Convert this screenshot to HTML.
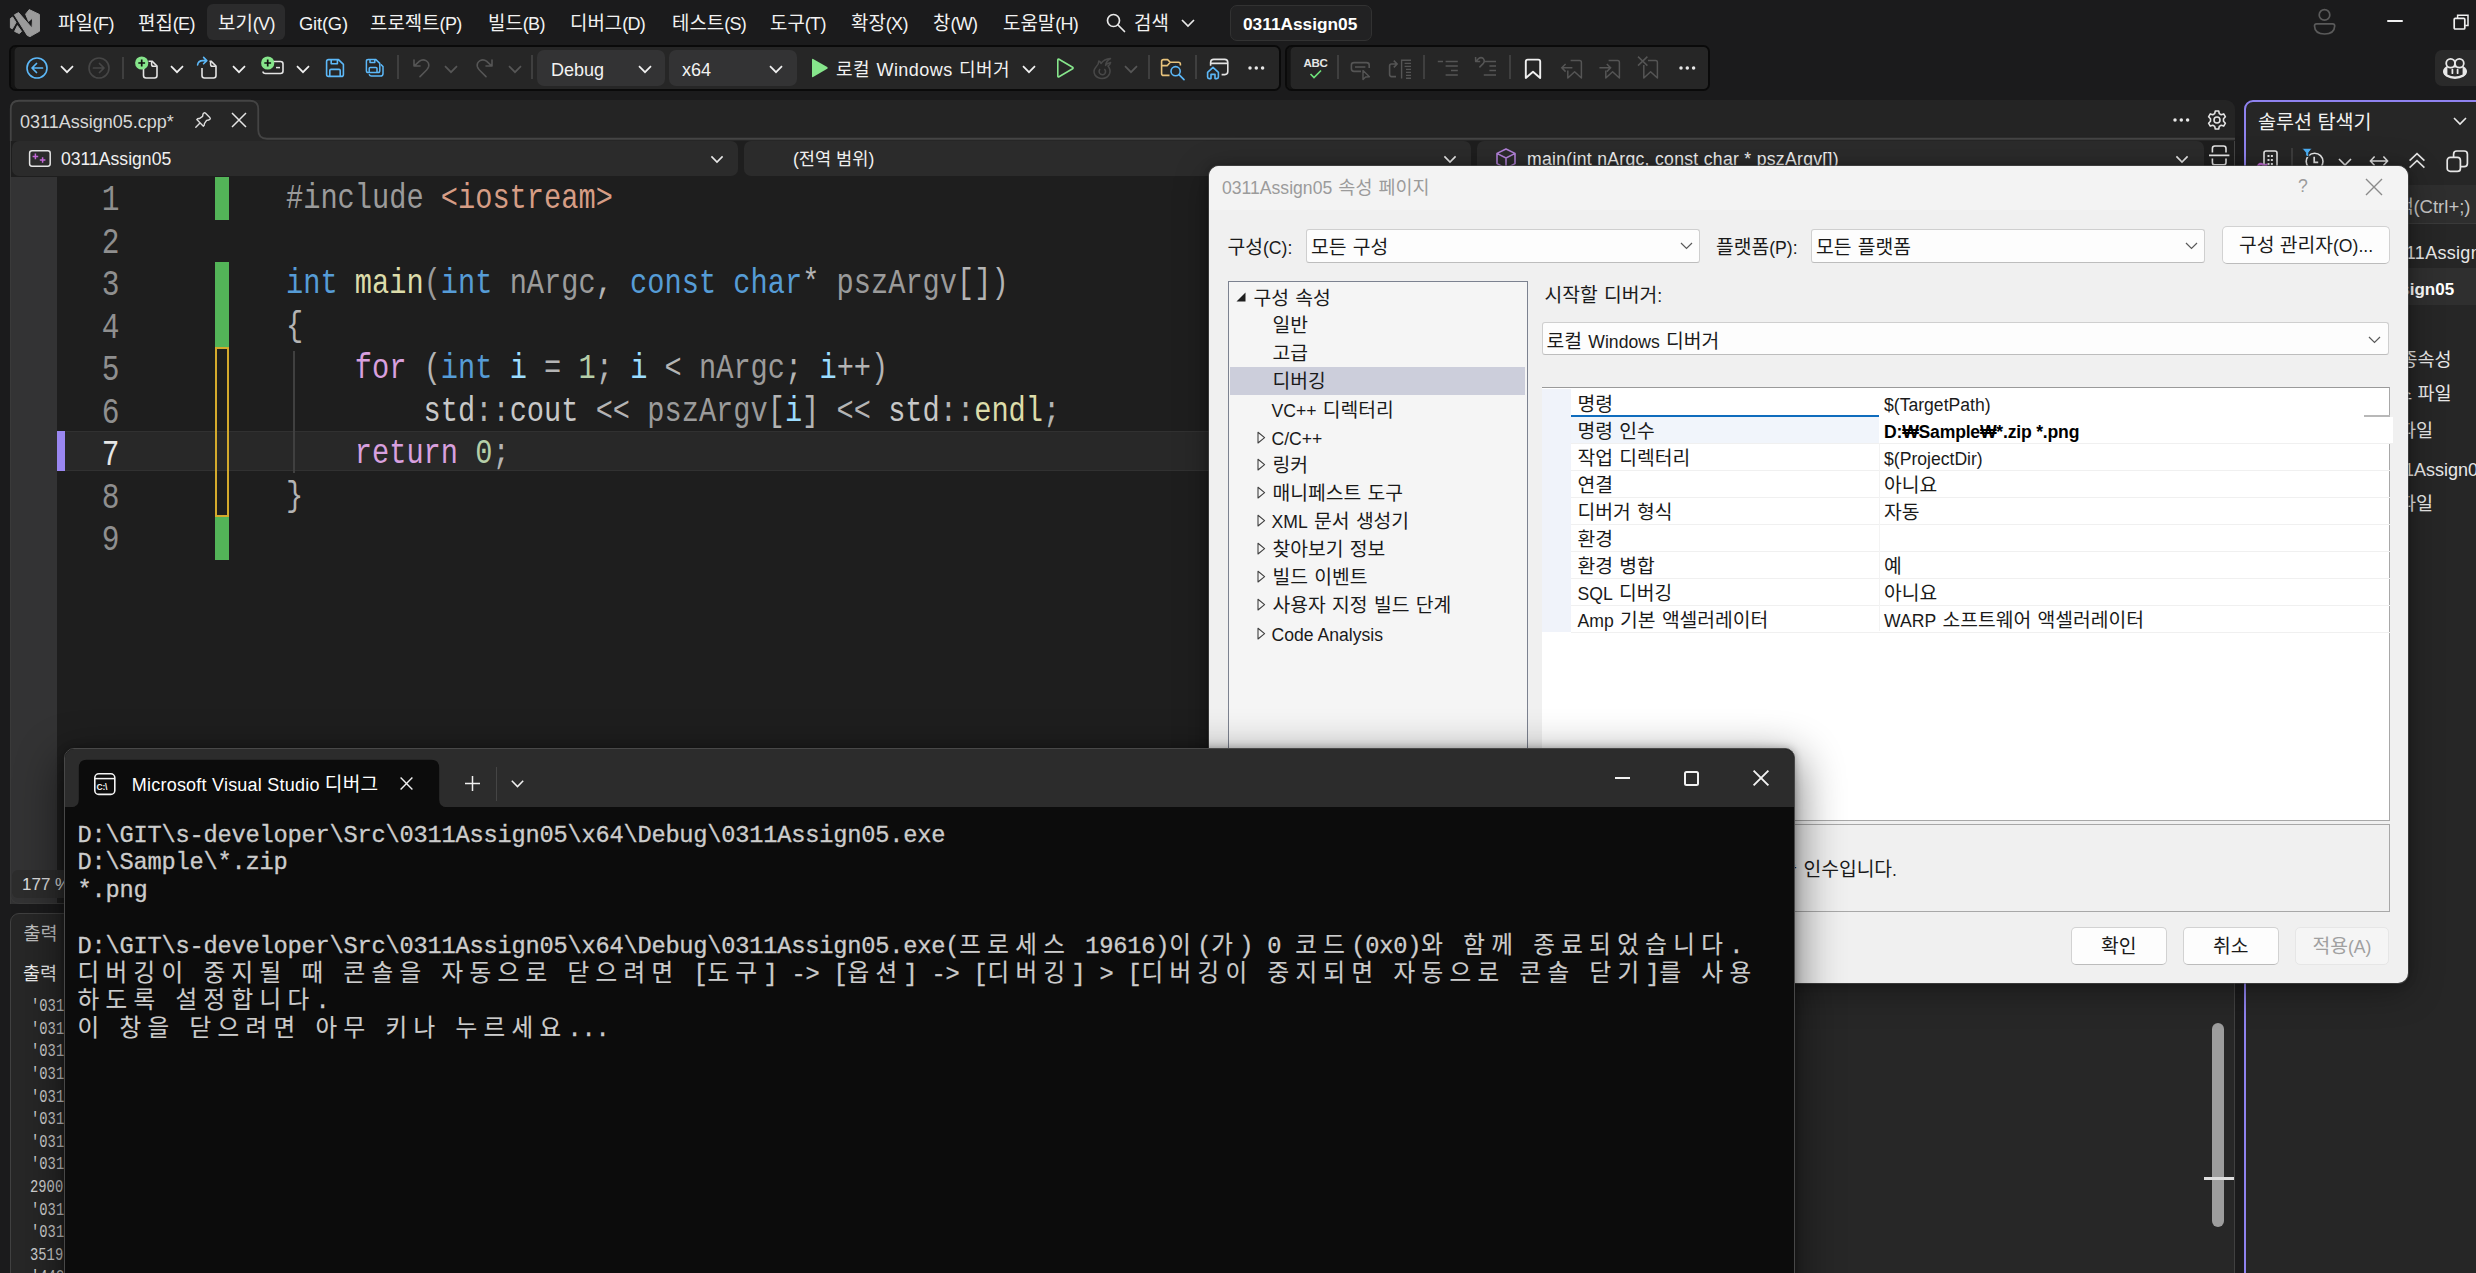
<!DOCTYPE html>
<html lang="ko">
<head>
<meta charset="utf-8">
<title>0311Assign05 - Microsoft Visual Studio</title>
<style>
*{box-sizing:border-box;margin:0;padding:0}
html,body{width:2476px;height:1273px;overflow:hidden;background:#1b1b1c}
body{position:relative;font-family:"Liberation Sans","Noto Sans CJK KR",sans-serif;color:#f0f0f0;font-size:18px}
.abs{position:absolute}
.t{position:absolute;white-space:pre;line-height:1}
svg{position:absolute;overflow:visible}
#menubar{left:0;top:0;width:2476px;height:46px;background:#1b1b1c}
.mi{position:absolute;top:12.6px;font-size:18.9px;line-height:22px;white-space:pre;color:#f2f2f2;letter-spacing:0}
.ml{font-size:18px;letter-spacing:-0.65px}
.tbgroup{position:absolute;top:44.7px;height:46px;background:#262626;border:2.2px solid #0a0a0a;border-radius:6.5px;box-shadow:inset 3.6px 0 0 #141414}
.combo{position:absolute;top:50px;height:36px;background:#333334;border-radius:7px}
.sep{position:absolute;width:2px;background:#3f3f3f;top:57px;height:22px}
.tt{position:absolute;top:58.5px;font-size:18px;line-height:22px;white-space:pre;color:#f2f2f2}
.code{position:absolute;left:286px;white-space:pre;font-family:"Liberation Mono",monospace;font-size:35px;line-height:42px;height:42px;color:#c8c8c8;transform:scaleX(0.819);transform-origin:0 0}
.ln{position:absolute;left:50px;width:69.5px;text-align:right;font-family:"Liberation Mono",monospace;font-size:36px;line-height:42px;height:42px;color:#8f8f8f;transform:scaleX(0.82);transform-origin:100% 0}
.kw{color:#569cd6}.fn{color:#dcdcaa}.pp{color:#9b9b9b}.st{color:#d69d85}.ct{color:#d8a0df}.nm{color:#b5cea8}.vr{color:#9cdcfe}.op{color:#b4b4b4}.pa{color:#9a9a9a}.id{color:#c8c8c8}.ns{color:#c8c8c8}
.nav{position:absolute;top:140.6px;height:35.6px;background:#2b2b2b;border-radius:7px}
.navt{position:absolute;top:149px;font-size:17.6px;line-height:20px;white-space:pre;color:#f0f0f0}
.ol{position:absolute;white-space:pre;font-family:"Liberation Mono",monospace;font-size:17.5px;line-height:20px;color:#d4d4d4;transform:scaleX(0.79);transform-origin:0 0}
.se{position:absolute;white-space:pre;font-size:18px;line-height:22px;color:#e8e8e8}
#dlg{position:absolute;left:1209px;top:166px;width:1199px;height:817px;background:#f0f0f0;border-radius:10px;box-shadow:0 0 0 1px rgba(80,80,80,.6),0 8px 34px rgba(0,0,0,.34),0 0 10px rgba(0,0,0,.28);overflow:hidden;color:#1a1a1a}
#dlg .d{position:absolute;white-space:pre;font-size:19.3px;line-height:24px;color:#1a1a1a;word-spacing:1px}
#dlg .l{font-size:17.6px;word-spacing:0}
#dlg .cb{position:absolute;background:#fdfdfd;border:1px solid #cfcfcf;border-bottom-color:#bdbdbd;border-radius:3px}
#dlg .btn{position:absolute;background:#fdfdfd;border:1px solid #d2d2d2;border-bottom-color:#bcbcbc;border-radius:5px;text-align:center;font-size:19.3px;line-height:37.5px;color:#1a1a1a}
#dlg .rl{position:absolute;left:362px;width:818px;height:1px;background:#efefef}
#dlg .d{margin-top:1.5px}
#con{position:absolute;left:63.5px;top:747.5px;width:1731.6px;height:560px;background:#0c0c0c;border:1.5px solid #484848;border-radius:10px 10px 0 0;box-shadow:0 14px 44px 5px rgba(0,0,0,.48),0 0 9px rgba(0,0,0,.3);overflow:hidden}
.cl{position:absolute;left:77.6px;white-space:pre;font-family:"Liberation Mono","Noto Sans CJK KR",monospace;font-size:23.7px;letter-spacing:-0.22px;line-height:28px;height:28px;color:#cccccc;-webkit-text-stroke:0.3px #cccccc}
.cl .k{font-size:23.5px;letter-spacing:6.38px;-webkit-text-stroke:0.15px #cccccc}

</style>
</head>
<body>
<div id="menubar" class="abs">
<svg style="left:0;top:0" width="50" height="46" viewBox="0 0 50 46"><g fill="#9b9b9b" stroke="#9b9b9b" stroke-width="1" stroke-linejoin="round"><path d="M10.4 18.6 L12.6 17 L16 22.4 L12.4 28.8 L10.4 27.8 Z"/><path d="M17.4 25.6 L21.6 31.4 L19.3 33.6 L14.6 31.4 Z"/><path d="M14.4 14.8 L18.6 12.6 L32 28 L32.6 18 L28.6 21.4 L25.6 14.2 L29.2 9.6 L39.4 14.4 L39.5 31.2 L30 36.6 L27.3 35.5 Z"/></g></svg>
<div class="abs" style="left:207px;top:4px;width:78px;height:36px;background:#2b2b2c;border-radius:6px"></div>
<span class="mi" style="left:58px">파일<span class="ml">(F)</span></span>
<span class="mi" style="left:138px">편집<span class="ml">(E)</span></span>
<span class="mi" style="left:218px">보기<span class="ml">(V)</span></span>
<span class="mi" style="left:299px"><span class="ml" style="font-size:18.4px;letter-spacing:-0.2px">Git(G)</span></span>
<span class="mi" style="left:370px">프로젝트<span class="ml">(P)</span></span>
<span class="mi" style="left:488px">빌드<span class="ml">(B)</span></span>
<span class="mi" style="left:570px">디버그<span class="ml">(D)</span></span>
<span class="mi" style="left:672px">테스트<span class="ml">(S)</span></span>
<span class="mi" style="left:770px">도구<span class="ml">(T)</span></span>
<span class="mi" style="left:851px">확장<span class="ml">(X)</span></span>
<span class="mi" style="left:933px">창<span class="ml">(W)</span></span>
<span class="mi" style="left:1003px">도움말<span class="ml">(H)</span></span>
<svg style="left:1105px;top:12px" width="22" height="22" viewBox="0 0 22 22"><circle cx="8.5" cy="8.5" r="6" fill="none" stroke="#e8e8e8" stroke-width="1.7"/><path d="M13 13 L19.5 19.5" stroke="#e8e8e8" stroke-width="1.7" stroke-linecap="round"/></svg>
<span class="mi" style="left:1134px">검색</span>
<svg style="left:1180px;top:18px" width="16" height="10" viewBox="0 0 16 10"><path d="M2 2 L8 8 L14 2" fill="none" stroke="#e8e8e8" stroke-width="1.7"/></svg>
<div class="abs" style="left:1230px;top:5px;width:142px;height:36px;background:#222223;border:1.2px solid #323232;border-radius:7px"></div>
<span class="mi" style="left:1243px;font-weight:bold;color:#fff;letter-spacing:0;font-size:17.3px">0311Assign05</span>
<svg style="left:2310px;top:6px" width="30" height="32" viewBox="0 0 30 32"><circle cx="14.5" cy="8.9" r="5.3" fill="none" stroke="#5a5a5a" stroke-width="1.7"/><path d="M6.6 17.9 H22.6 Q24.7 17.9 24.7 20 Q24.4 28 14.6 28 Q4.8 28 4.5 20 Q4.5 17.9 6.6 17.9 Z" fill="none" stroke="#5a5a5a" stroke-width="1.7"/></svg>
<div class="abs" style="left:2387px;top:20px;width:16px;height:2px;border-radius:1px;background:#f0f0f0"></div>
<svg style="left:2452px;top:13px" width="18" height="18" viewBox="0 0 18 18"><path d="M5.6 5 V2.2 H16 V12.6 H13.2" fill="none" stroke="#f0f0f0" stroke-width="1.5"/><rect x="2.2" y="5.4" width="10.6" height="10.6" rx="1" fill="none" stroke="#f0f0f0" stroke-width="1.7"/></svg>
</div>

<!-- TOOLBAR -->
<div class="tbgroup" style="left:9.2px;width:1271.6px"></div>
<div class="tbgroup" style="left:1285.4px;width:424.6px"></div>
<svg style="left:25px;top:56px" width="24" height="24" viewBox="0 0 24 24"><circle cx="12" cy="12" r="10" fill="none" stroke="#5cb8f8" stroke-width="1.6"/><path d="M17.5 12 H7.5 M11.5 7.5 L7 12 L11.5 16.5" fill="none" stroke="#5cb8f8" stroke-width="1.7" stroke-linecap="round" stroke-linejoin="round"/></svg>
<svg style="left:60px;top:65.0px" width="14" height="9" viewBox="0 0 14 9"><path d="M1 1.2 L7 7.2 L13 1.2" fill="none" stroke="#f0f0f0" stroke-width="1.7"/></svg>
<svg style="left:87px;top:56px" width="24" height="24" viewBox="0 0 24 24"><circle cx="12" cy="12" r="10" fill="none" stroke="#464646" stroke-width="1.6"/><path d="M6.5 12 H16.5 M12.5 7.5 L17 12 L12.5 16.5" fill="none" stroke="#464646" stroke-width="1.7" stroke-linecap="round" stroke-linejoin="round"/></svg>
<div class="sep" style="left:122px;top:57px;height:22px"></div>
<svg style="left:133px;top:55px" width="28" height="26" viewBox="0 0 28 26"><path d="M10.5 12 V20.5 Q10.5 23 13 23 H21.5 Q24 23 24 20.5 V11 L19 6.2 H15.5" fill="none" stroke="#e4e4e4" stroke-width="1.6" stroke-linejoin="round"/><path d="M18.6 6.4 V9.4 Q18.6 11.2 20.4 11.2 H23.8" fill="none" stroke="#e4e4e4" stroke-width="1.5"/><circle cx="8.7" cy="8" r="6.6" fill="#86e58b"/><path d="M8.7 4.6 V11.4 M5.3 8 H12.1" stroke="#111" stroke-width="1.7"/></svg>
<svg style="left:170px;top:65.0px" width="14" height="9" viewBox="0 0 14 9"><path d="M1 1.2 L7 7.2 L13 1.2" fill="none" stroke="#f0f0f0" stroke-width="1.7"/></svg>
<svg style="left:195px;top:55px" width="26" height="26" viewBox="0 0 26 26"><path d="M7 13 V20.5 Q7 23 9.5 23 H18.5 Q21 23 21 20.5 V11 L16 6.2 H14.5" fill="none" stroke="#e4e4e4" stroke-width="1.6" stroke-linejoin="round"/><path d="M15.6 6.4 V9.4 Q15.6 11.2 17.4 11.2 H20.8" fill="none" stroke="#e4e4e4" stroke-width="1.5"/><path d="M2.6 10 Q3 5.6 8 5.6 H11.4 M8.6 2.4 L11.8 5.6 L8.6 8.8" fill="none" stroke="#5cb8f8" stroke-width="1.6" stroke-linecap="round" stroke-linejoin="round"/></svg>
<svg style="left:232px;top:65.0px" width="14" height="9" viewBox="0 0 14 9"><path d="M1 1.2 L7 7.2 L13 1.2" fill="none" stroke="#f0f0f0" stroke-width="1.7"/></svg>
<svg style="left:258px;top:55px" width="28" height="24" viewBox="0 0 28 24"><path d="M14 6.5 H22.5 Q25 6.5 25 9 V16 Q25 18.5 22.5 18.5 H7.5 Q5 18.5 5 16.5" fill="none" stroke="#e4e4e4" stroke-width="1.6"/><path d="M18 12.6 H22" stroke="#e4e4e4" stroke-width="1.5"/><circle cx="9.7" cy="8" r="6.6" fill="#86e58b"/><path d="M9.7 4.6 V11.4 M6.3 8 H13.1" stroke="#111" stroke-width="1.7"/></svg>
<svg style="left:296px;top:65.0px" width="14" height="9" viewBox="0 0 14 9"><path d="M1 1.2 L7 7.2 L13 1.2" fill="none" stroke="#f0f0f0" stroke-width="1.7"/></svg>
<svg style="left:325px;top:58px" width="20" height="20" viewBox="0 0 20 20"><path d="M3.5 1.6 H13.5 L18.4 6.4 V16.4 Q18.4 18.4 16.4 18.4 H3.5 Q1.6 18.4 1.6 16.4 V3.5 Q1.6 1.6 3.5 1.6 Z M6.2 1.8 V5.8 H12.4 V1.8 M4.8 18.2 V12.6 Q4.8 11.4 6 11.4 H14 Q15.2 11.4 15.2 12.6 V18.2" fill="none" stroke="#5cb8f8" stroke-width="1.6" stroke-linejoin="round"/></svg>
<svg style="left:365px;top:58px" width="20" height="20" viewBox="0 0 20 20"><path d="M3.2 1.4 H10.6 L14.8 5.4 V12.8 Q14.8 14.6 13 14.6 H3.2 Q1.4 14.6 1.4 12.8 V3.2 Q1.4 1.4 3.2 1.4 Z M5 1.6 V4.6 H9.8 V1.6 M4.2 14.4 V10.4 Q4.2 9.4 5.2 9.4 H11 Q12 9.4 12 10.4 V14.4" fill="none" stroke="#5cb8f8" stroke-width="1.5" stroke-linejoin="round"/><path d="M16.2 6.8 L18 8.6 V15.4 Q18 18 15.4 18 H6.4 Q4.8 18 4.4 16.8" fill="none" stroke="#5cb8f8" stroke-width="1.5" stroke-linecap="round"/></svg>
<div class="sep" style="left:397px;top:55px;height:24px"></div>
<svg style="left:411px;top:57px" width="22" height="22" viewBox="0 0 22 22"><path d="M3 3 V9 H9 M3.4 8.8 L8.5 4.2 Q11.5 1.8 15 3.6 Q18.6 5.8 17.6 9.8 Q17 11.6 15.6 13 L9 19.6" fill="none" stroke="#565656" stroke-width="1.6" stroke-linecap="round" stroke-linejoin="round"/></svg>
<svg style="left:444px;top:65.0px" width="14" height="9" viewBox="0 0 14 9"><path d="M1 1.2 L7 7.2 L13 1.2" fill="none" stroke="#565656" stroke-width="1.7"/></svg>
<svg style="left:473px;top:57px" width="22" height="22" viewBox="0 0 22 22"><path d="M19 3 V9 H13 M18.6 8.8 L13.5 4.2 Q10.5 1.8 7 3.6 Q3.4 5.8 4.4 9.8 Q5 11.6 6.4 13 L13 19.6" fill="none" stroke="#565656" stroke-width="1.6" stroke-linecap="round" stroke-linejoin="round"/></svg>
<svg style="left:508px;top:65.0px" width="14" height="9" viewBox="0 0 14 9"><path d="M1 1.2 L7 7.2 L13 1.2" fill="none" stroke="#565656" stroke-width="1.7"/></svg>
<div class="sep" style="left:531px;top:55px;height:24px"></div>
<div class="combo" style="left:537px;width:128px"></div><span class="tt" style="left:551px">Debug</span>
<svg style="left:638px;top:64.5px" width="14" height="9" viewBox="0 0 14 9"><path d="M1 1.2 L7 7.2 L13 1.2" fill="none" stroke="#f0f0f0" stroke-width="1.7"/></svg>
<div class="combo" style="left:669px;width:128px"></div><span class="tt" style="left:682px">x64</span>
<svg style="left:769px;top:64.5px" width="14" height="9" viewBox="0 0 14 9"><path d="M1 1.2 L7 7.2 L13 1.2" fill="none" stroke="#f0f0f0" stroke-width="1.7"/></svg>
<svg style="left:809px;top:57px" width="22" height="22" viewBox="0 0 22 22"><path d="M3 2.6 Q3 1.4 4.1 2 L18.2 10 Q19.4 11 18.2 11.8 L4.1 20 Q3 20.6 3 19.4 Z" fill="#86e58b"/></svg>
<span class="tt" style="left:836px;letter-spacing:0.45px;word-spacing:1px">로컬 Windows 디버거</span>
<svg style="left:1022px;top:64.5px" width="14" height="9" viewBox="0 0 14 9"><path d="M1 1.2 L7 7.2 L13 1.2" fill="none" stroke="#f0f0f0" stroke-width="1.7"/></svg>
<svg style="left:1055px;top:57px" width="22" height="22" viewBox="0 0 22 22"><path d="M2.8 3 Q2.8 1.6 4 2.3 L17.6 10.2 Q18.6 11 17.6 11.8 L4 19.7 Q2.8 20.4 2.8 19 Z" fill="none" stroke="#86e58b" stroke-width="1.6" stroke-linejoin="round"/></svg>
<svg style="left:1091px;top:56px" width="24" height="24" viewBox="0 0 24 24"><path d="M19.5 2.5 Q13 3 10 7.5 Q9.4 5.6 7.8 5 Q8 8 5 11 Q1.6 15 4 19 Q6.4 22.4 11 22.4 Q16.6 22.4 18.6 17.6 Q20 14 17 10 Q19 9 19.6 6.6 Q16 7.4 14.6 9.4 Q15 5 19.5 2.5 Z" fill="none" stroke="#484848" stroke-width="1.5" stroke-linejoin="round"/><path d="M9 13 Q7 16 9.4 18 Q12 19.6 14 17.4 Q15.4 15 13.4 13" fill="none" stroke="#484848" stroke-width="1.5"/></svg>
<svg style="left:1124px;top:65.0px" width="14" height="9" viewBox="0 0 14 9"><path d="M1 1.2 L7 7.2 L13 1.2" fill="none" stroke="#565656" stroke-width="1.7"/></svg>
<div class="sep" style="left:1148px;top:55px;height:24px"></div>
<svg style="left:1159px;top:56px" width="28" height="26" viewBox="0 0 28 26"><path d="M10.5 19.4 H4.6 Q2.6 19.4 2.6 17.4 V5.6 Q2.6 3.6 4.6 3.6 H8.6 L11.2 6.2 H19.4 Q21.4 6.2 21.4 8.2 V9.4 M2.8 9.6 H8.4 L11 6.6" fill="none" stroke="#e8c37c" stroke-width="1.6" stroke-linejoin="round"/><circle cx="16.6" cy="15.2" r="4.6" fill="none" stroke="#5cb8f8" stroke-width="1.6"/><path d="M20 18.6 L25 23.6" stroke="#5cb8f8" stroke-width="1.7" stroke-linecap="round"/></svg>
<div class="sep" style="left:1195px;top:55px;height:24px"></div>
<svg style="left:1205px;top:57px" width="26" height="24" viewBox="0 0 26 24"><path d="M5.6 8.8 V5.6 Q5.6 2.4 8.8 2.4 H19.6 Q22.8 2.4 22.8 5.6 V14.6 Q22.8 17.6 19.8 17.6 H16.6 M5.8 6.4 H22.6" fill="none" stroke="#e4e4e4" stroke-width="1.6"/><path d="M2.6 15.4 L8 10.4 L13.4 15.4 V20 Q13.4 21.6 11.8 21.6 H10 V17.4 H6 V21.6 H4.2 Q2.6 21.6 2.6 20 Z" fill="none" stroke="#5cb8f8" stroke-width="1.6" stroke-linejoin="round"/></svg>

<span class="t" style="left:1303.5px;top:58px;font-size:11.5px;font-weight:bold;color:#e6e6e6;letter-spacing:-0.3px">ABC</span>
<svg style="left:1309px;top:69px" width="14" height="10" viewBox="0 0 14 10"><path d="M1.5 5 L5 8.5 L12 1.5" fill="none" stroke="#6ee27a" stroke-width="1.7"/></svg>
<div class="sep" style="left:1337px;top:55px;height:24px"></div>
<svg style="left:1349px;top:60px" width="24" height="22" viewBox="0 0 24 22"><path d="M12 11.4 H5 Q2.4 11.4 2.4 8.8 V5 Q2.4 2.6 5 2.6 H17.6 Q20.2 2.6 20.2 5 V8 M6 7 H16.4" fill="none" stroke="#555555" stroke-width="1.6"/><path d="M14 10.6 V19.6 L16.6 17 L20.4 16.8 Z" fill="none" stroke="#555555" stroke-width="1.4" stroke-linejoin="round"/></svg>
<svg style="left:1387px;top:57px" width="26" height="24" viewBox="0 0 26 24"><path d="M9 19.6 H4.6 Q2.6 19.6 2.6 17.6 V9 Q2.6 7 4.6 7 H9.6 M6.8 3.6 L10.2 7 L6.8 10.4" fill="none" stroke="#555555" stroke-width="1.6" stroke-linejoin="round"/><path d="M14.6 21.6 V3.2 H24 M17.6 6.4 H24 M17.6 9.4 H24 M19 12.4 H24 M19 15.4 H24 M19 18.4 H24 M19 21.2 H24" fill="none" stroke="#555555" stroke-width="1.4"/></svg>
<div class="sep" style="left:1423px;top:55px;height:24px"></div>
<svg style="left:1436px;top:59px" width="24" height="18" viewBox="0 0 24 18"><path d="M1.8 2.4 H7 M9.6 2.4 H21.8 M9.6 7 H21.8 M15 11.4 H21.8 M9.6 16 H21.8" fill="none" stroke="#555555" stroke-width="1.5"/></svg>
<svg style="left:1474px;top:55px" width="24" height="24" viewBox="0 0 24 24"><path d="M10.8 6.4 H22 M15.4 11 H22 M15.4 15.4 H22 M9.8 20 H22" fill="none" stroke="#555555" stroke-width="1.5"/><path d="M1.6 2 V6.6 H6.2 M2 6.4 L4.6 3.6 Q7 1.6 9.4 3.6 Q11.2 6 9.4 8.4 L5.4 12.4" fill="none" stroke="#555555" stroke-width="1.5" stroke-linejoin="round"/></svg>
<div class="sep" style="left:1509px;top:55px;height:24px"></div>
<svg style="left:1524px;top:58px" width="18" height="22" viewBox="0 0 18 22"><path d="M1.8 20 V3.6 Q1.8 1.6 3.8 1.6 H14.2 Q16.2 1.6 16.2 3.6 V20 L9 13.8 Z" fill="none" stroke="#f0f0f0" stroke-width="1.9" stroke-linejoin="round"/></svg>
<svg style="left:1560px;top:58px" width="24" height="22" viewBox="0 0 24 22"><path d="M10.6 2.4 H19.6 Q21.4 2.4 21.4 4.2 V20 L14.6 13.8 L7.8 20 V12.4" fill="none" stroke="#555555" stroke-width="1.5" stroke-linejoin="round"/><path d="M12.4 9.8 H1.8 M5.6 6 L1.8 9.8 L5.6 13.6" fill="none" stroke="#555555" stroke-width="1.5"/></svg>
<svg style="left:1598px;top:58px" width="24" height="22" viewBox="0 0 24 22"><path d="M10.6 2.4 H19.6 Q21.4 2.4 21.4 4.2 V20 L14.6 13.8 L7.8 20 V12.4" fill="none" stroke="#555555" stroke-width="1.5" stroke-linejoin="round"/><path d="M1.4 9.8 H12.6 M8.8 6 L12.6 9.8 L8.8 13.6" fill="none" stroke="#555555" stroke-width="1.5"/></svg>
<svg style="left:1636px;top:55px" width="24" height="25" viewBox="0 0 24 25"><path d="M12 5.4 H19.6 Q21.4 5.4 21.4 7.2 V23 L14.6 16.8 L7.8 23 V10" fill="none" stroke="#555555" stroke-width="1.5" stroke-linejoin="round"/><path d="M2 1.6 L11.4 10.6 M11.4 1.6 L2 10.6" fill="none" stroke="#555555" stroke-width="1.5"/></svg>

<div class="abs" style="left:2435px;top:50px;width:60px;height:36px;background:#2a2a2a;border-radius:7px"></div>
<svg style="left:2441px;top:55px" width="28" height="26" viewBox="0 0 28 26"><ellipse cx="14" cy="16.6" rx="12" ry="7.4" fill="#e8e8e8"/><path d="M6.4 12.6 H21.6 V19.4 Q18 21.4 14 21.4 Q10 21.4 6.4 19.4 Z" fill="#2a2a2a"/><circle cx="9.6" cy="8.2" r="4.4" fill="#2a2a2a" stroke="#e8e8e8" stroke-width="1.8"/><circle cx="18.4" cy="8.2" r="4.4" fill="#2a2a2a" stroke="#e8e8e8" stroke-width="1.8"/><path d="M11.4 14.6 V18.2 M16.6 14.6 V18.2" stroke="#e8e8e8" stroke-width="1.8" stroke-linecap="round"/></svg>
<svg style="left:1246.9px;top:65px" width="18.6" height="6" viewBox="0 0 18.6 6"><circle cx="3" cy="3" r="1.75" fill="#e8e8e8"/><circle cx="9.3" cy="3" r="1.75" fill="#e8e8e8"/><circle cx="15.6" cy="3" r="1.75" fill="#e8e8e8"/></svg>
<svg style="left:1677.9px;top:65px" width="18.6" height="6" viewBox="0 0 18.6 6"><circle cx="3" cy="3" r="1.75" fill="#e8e8e8"/><circle cx="9.3" cy="3" r="1.75" fill="#e8e8e8"/><circle cx="15.6" cy="3" r="1.75" fill="#e8e8e8"/></svg>

<!-- EDITOR -->
<div class="abs" style="left:10px;top:100px;width:2225px;height:804px;background:#242424;border-radius:9px 9px 0 0"></div>
<div class="abs" style="left:10px;top:139px;width:2225px;height:765px;background:#1e1e1e;border-right:1.6px solid #444;border-left:1.2px solid #3a3a3a"></div>
<svg style="left:0;top:0" width="2476" height="145" viewBox="0 0 2476 145"><path d="M10.75 141 V109 Q10.75 100.75 19 100.75 H250 Q258.25 100.75 258.25 109 V130 Q258.25 138.75 267 138.75 H2235 V141 Z" fill="#262626"/><path d="M10.75 141 V109 Q10.75 100.75 19 100.75 H250 Q258.25 100.75 258.25 109 V130 Q258.25 138.75 267 138.75 H2235" fill="none" stroke="#444" stroke-width="1.8"/></svg>
<span class="t" style="left:20px;top:112px;font-size:18px;line-height:20px;color:#d8d8d8">0311Assign05.cpp*</span>
<svg style="left:194px;top:111px" width="18" height="18" viewBox="0 0 18 18"><path d="M9.6 2.2 Q10.6 1.2 11.6 2.2 L15.8 6.4 Q16.8 7.4 15.8 8.4 L14.8 9 L12.6 9.4 L10.4 12.6 Q10.6 14.4 9.4 15.2 L2.8 8.6 Q3.6 7.4 5.4 7.6 L8.6 5.4 L9 3.2 Z M6 12 L1.8 16.2" fill="none" stroke="#dcdcdc" stroke-width="1.4" stroke-linejoin="round" stroke-linecap="round"/></svg>
<svg style="left:231px;top:112px" width="16" height="16" viewBox="0 0 16 16"><path d="M1 1 L15 15 M15 1 L1 15" stroke="#e4e4e4" stroke-width="1.5"/></svg>

<svg style="left:2206px;top:109px" width="22" height="22" viewBox="0 0 22 22"><circle cx="11" cy="11" r="3" fill="none" stroke="#e4e4e4" stroke-width="1.6"/><path d="M9.3 2 H12.7 L13.3 4.6 L15.2 5.7 L17.7 4.9 L19.4 7.8 L17.5 9.7 V12.3 L19.4 14.2 L17.7 17.1 L15.2 16.3 L13.3 17.4 L12.7 20 H9.3 L8.7 17.4 L6.8 16.3 L4.3 17.1 L2.6 14.2 L4.5 12.3 V9.7 L2.6 7.8 L4.3 4.9 L6.8 5.7 L8.7 4.6 Z" fill="none" stroke="#e4e4e4" stroke-width="1.6" stroke-linejoin="round"/></svg>
<div class="nav" style="left:12px;width:726px"></div>
<div class="nav" style="left:744px;width:727px"></div>
<div class="nav" style="left:1477px;width:726.5px"></div>
<svg style="left:28px;top:149px" width="24" height="19" viewBox="0 0 24 19"><rect x="1.6" y="1.8" width="20.6" height="15.4" rx="2.4" fill="none" stroke="#e4e4e4" stroke-width="1.5"/><path d="M7.4 4.6 V10.2 M4.6 7.4 H10.2 M14.6 8.2 V13.8 M11.8 11 H17.4" stroke="#c267d6" stroke-width="1.5"/></svg>
<span class="navt" style="left:61px">0311Assign05</span>
<svg style="left:710px;top:154.5px" width="14" height="9" viewBox="0 0 14 9"><path d="M1.4 1.4 L7 7 L12.6 1.4" fill="none" stroke="#e8e8e8" stroke-width="1.6"/></svg>
<span class="navt" style="left:793px">(전역 범위)</span>
<svg style="left:1443px;top:154.5px" width="14" height="9" viewBox="0 0 14 9"><path d="M1.4 1.4 L7 7 L12.6 1.4" fill="none" stroke="#e8e8e8" stroke-width="1.6"/></svg>
<svg style="left:1494px;top:147px" width="24" height="24" viewBox="0 0 24 24"><path d="M12 2 L21 6.4 V16.6 L12 21.4 L3 16.6 V6.4 Z M3.4 6.6 L12 11 L20.6 6.6 M12 11 V21" fill="none" stroke="#b180d7" stroke-width="1.6" stroke-linejoin="round"/></svg>
<span class="navt" style="left:1527px;letter-spacing:0.3px">main(int nArgc, const char * pszArgv[])</span>
<svg style="left:2175px;top:154.5px" width="14" height="9" viewBox="0 0 14 9"><path d="M1.4 1.4 L7 7 L12.6 1.4" fill="none" stroke="#e8e8e8" stroke-width="1.6"/></svg>
<svg style="left:2208px;top:143px" width="22" height="24" viewBox="0 0 22 24"><path d="M4.4 9.4 V5.4 Q4.4 3 6.8 3 H15.6 Q18 3 18 5.4 V9.4 M1 12.4 H21.4 M4.4 15.4 V19.4 Q4.4 21.8 6.8 21.8 H15.6 Q18 21.8 18 19.4 V15.4" fill="none" stroke="#e4e4e4" stroke-width="1.6"/></svg>
<div class="abs" style="left:11px;top:177px;width:46px;height:727px;background:#333334"></div>
<div class="abs" style="left:57px;top:177px;width:2178px;height:727px;background:#1e1e1e"></div>
<div class="abs" style="left:57px;top:431px;width:2178px;height:40px;background:#282828;border-top:1.5px solid #313131;border-bottom:1.5px solid #313131"></div>
<div class="abs" style="left:57px;top:431px;width:8px;height:40px;background:#9a87f1"></div>
<div class="abs" style="left:215px;top:177px;width:14px;height:43px;background:#53b458"></div>
<div class="abs" style="left:215px;top:262px;width:14px;height:85.5px;background:#53b458"></div>
<div class="abs" style="left:215px;top:516.5px;width:14px;height:43.5px;background:#53b458"></div>
<div class="abs" style="left:215px;top:347px;width:14px;height:170px;border:2.4px solid #d4aa2c"></div>
<div class="abs" style="left:293px;top:351px;width:2px;height:122px;background:#404040"></div>
<div class="ln" style="top:180.0px;color:#8f8f8f">1</div>
<div class="code" style="top:178.0px"><span class="pp">#include </span><span class="st">&lt;iostream&gt;</span></div>
<div class="ln" style="top:222.5px;color:#8f8f8f">2</div>
<div class="ln" style="top:265.0px;color:#8f8f8f">3</div>
<div class="code" style="top:263.0px"><span class="kw">int</span> <span class="fn">main</span><span class="pa">(</span><span class="kw">int</span> <span class="pp">nArgc</span><span class="op">,</span> <span class="kw">const</span> <span class="kw">char</span><span class="op">*</span> <span class="pp">pszArgv</span><span class="op">[])</span></div>
<div class="ln" style="top:307.5px;color:#8f8f8f">4</div>
<div class="code" style="top:305.5px"><span class="op">{</span></div>
<div class="ln" style="top:350.0px;color:#8f8f8f">5</div>
<div class="code" style="top:348.0px">    <span class="ct">for</span> <span class="op">(</span><span class="kw">int</span> <span class="vr">i</span> <span class="op">=</span> <span class="nm">1</span><span class="op">;</span> <span class="vr">i</span> <span class="op">&lt;</span> <span class="pp">nArgc</span><span class="op">;</span> <span class="vr">i</span><span class="op">++)</span></div>
<div class="ln" style="top:392.5px;color:#8f8f8f">6</div>
<div class="code" style="top:390.5px">        <span class="ns">std</span><span class="op">::</span><span class="ns">cout</span> <span class="op">&lt;&lt;</span> <span class="pp">pszArgv</span><span class="op">[</span><span class="vr">i</span><span class="op">]</span> <span class="op">&lt;&lt;</span> <span class="ns">std</span><span class="op">::</span><span class="fn">endl</span><span class="op">;</span></div>
<div class="ln" style="top:435.0px;color:#e6e6e6">7</div>
<div class="code" style="top:433.0px">    <span class="ct">return</span> <span class="nm">0</span><span class="op">;</span></div>
<div class="ln" style="top:477.5px;color:#8f8f8f">8</div>
<div class="code" style="top:475.5px"><span class="op">}</span></div>
<div class="ln" style="top:520.0px;color:#8f8f8f">9</div>
<div class="abs" style="left:12px;top:870px;width:120px;height:28px;background:#2d2d2d;border-radius:6px"></div>
<span class="t" style="left:22px;top:876px;font-size:17px;line-height:18px;color:#e0e0e0">177 %</span>
<svg style="left:2171.7px;top:117.1px" width="18.6" height="6" viewBox="0 0 18.6 6"><circle cx="3" cy="3" r="1.75" fill="#e8e8e8"/><circle cx="9.3" cy="3" r="1.75" fill="#e8e8e8"/><circle cx="15.6" cy="3" r="1.75" fill="#e8e8e8"/></svg>

<!-- OUTPUT -->
<div class="abs" style="left:10px;top:860px;width:2225px;height:44px;border:1.5px solid #3a3a3a;border-top:none;border-radius:0 0 9px 9px"></div>
<div class="abs" style="left:10px;top:913px;width:2225px;height:380px;background:#272727;border:1.5px solid #404040;border-radius:9px 9px 0 0"></div>
<span class="t" style="left:23.5px;top:923px;font-size:18.5px;line-height:22px;color:#c4c4c4">출력</span>
<span class="t" style="left:23px;top:963px;font-size:18.5px;line-height:22px;color:#f2f2f2">출력   보기 선택(S):</span>
<div class="ol" style="left:31px;top:995.5px">'0311Assign05.exe'(Win32): 'C:\Windows\System32\kernel32.dll'을(를) 로드했습니다.</div>
<div class="ol" style="left:31px;top:1018.5px">'0311Assign05.exe'(Win32): 'C:\Windows\System32\kernel32.dll'을(를) 로드했습니다.</div>
<div class="ol" style="left:31px;top:1040.5px">'0311Assign05.exe'(Win32): 'C:\Windows\System32\kernel32.dll'을(를) 로드했습니다.</div>
<div class="ol" style="left:31px;top:1063.5px">'0311Assign05.exe'(Win32): 'C:\Windows\System32\kernel32.dll'을(를) 로드했습니다.</div>
<div class="ol" style="left:31px;top:1086.5px">'0311Assign05.exe'(Win32): 'C:\Windows\System32\kernel32.dll'을(를) 로드했습니다.</div>
<div class="ol" style="left:31px;top:1108.5px">'0311Assign05.exe'(Win32): 'C:\Windows\System32\kernel32.dll'을(를) 로드했습니다.</div>
<div class="ol" style="left:31px;top:1131.5px">'0311Assign05.exe'(Win32): 'C:\Windows\System32\kernel32.dll'을(를) 로드했습니다.</div>
<div class="ol" style="left:31px;top:1153.5px">'0311Assign05.exe'(Win32): 'C:\Windows\System32\kernel32.dll'을(를) 로드했습니다.</div>
<div class="ol" style="left:29.5px;top:1176.5px">2900 스레드가 종료되었습니다(코드: 0 (0x0)).</div>
<div class="ol" style="left:31px;top:1199.5px">'0311Assign05.exe'(Win32): 'C:\Windows\System32\ucrtbased.dll'을(를) 로드했습니다.</div>
<div class="ol" style="left:31px;top:1221.5px">'0311Assign05.exe'(Win32): 'C:\Windows\System32\ucrtbased.dll'을(를) 로드했습니다.</div>
<div class="ol" style="left:29.5px;top:1244.5px">3519 스레드가 종료되었습니다(코드: 0 (0x0)).</div>
<div class="ol" style="left:31px;top:1266.5px">'4480' 프로그램이 종료되었습니다(코드: 0 (0x0)).</div>
<div class="abs" style="left:2212px;top:1023px;width:12.4px;height:204px;background:#9d9d9d;border-radius:6px"></div>
<div class="abs" style="left:2204px;top:1177px;width:29.5px;height:3px;background:#dedede"></div>

<!-- SOLUTION EXPLORER -->
<div class="abs" style="left:2244px;top:100px;width:260px;height:1200px;background:#262626;border:2px solid #8f82ef;border-radius:9px 0 0 0"></div>
<span class="t" style="left:2258px;top:110px;font-size:19.6px;line-height:24px;color:#f2f2f2">솔루션 탐색기</span>
<svg style="left:2452.5px;top:117.0px" width="14" height="8.0" viewBox="0 0 14 8.0"><path d="M1 1 L7.0 7.0 L13 1" fill="none" stroke="#e8e8e8" stroke-width="1.6"/></svg>
<svg style="left:2256px;top:148px" width="24" height="24" viewBox="0 0 24 24"><path d="M8 20 V5 Q8 3 10 3 H19 Q21 3 21 5 V20" fill="none" stroke="#e4e4e4" stroke-width="1.6"/><path d="M11.5 8 H17.5 M11.5 12 H17.5 M11.5 16 H17.5" stroke="#e4e4e4" stroke-width="1.8" stroke-dasharray="2 1.4"/><path d="M1.5 19 Q4 14 7 17 Q9 19 11 16" fill="none" stroke="#c267d6" stroke-width="2.4"/></svg>
<div class="abs" style="left:2291px;top:148px;width:2px;height:24px;background:#3c3c3c"></div>
<svg style="left:2301px;top:147px" width="26" height="26" viewBox="0 0 26 26"><circle cx="13.6" cy="14.6" r="8.4" fill="none" stroke="#e6e6e6" stroke-width="1.6"/><path d="M13.2 9.8 V15.4 H17.2" fill="none" stroke="#e6e6e6" stroke-width="1.7"/><path d="M0.8 1.2 H11.2 L7.8 5.6 V10.2 L4.6 8.6 V5.6 Z" fill="#4cb0f6" stroke="#262626" stroke-width="1"/></svg>
<svg style="left:2338.0px;top:158.0px" width="14" height="8.0" viewBox="0 0 14 8.0"><path d="M1 1 L7.0 7.0 L13 1" fill="none" stroke="#e8e8e8" stroke-width="1.6"/></svg>
<svg style="left:2369px;top:153px" width="20" height="16" viewBox="0 0 20 16"><path d="M1.4 8 H18.6 M5.6 3.6 L1.4 8 L5.6 12.4 M14.4 3.6 L18.6 8 L14.4 12.4" fill="none" stroke="#e4e4e4" stroke-width="1.5"/></svg>
<svg style="left:2408px;top:152px" width="18" height="18" viewBox="0 0 18 18"><path d="M1.6 8.6 L9 1.6 L16.4 8.6 M1.6 15.6 L9 8.6 L16.4 15.6" fill="none" stroke="#e4e4e4" stroke-width="1.6"/></svg>
<svg style="left:2445px;top:149px" width="24" height="24" viewBox="0 0 24 24"><rect x="8.6" y="2" width="13.8" height="15.6" rx="3.2" fill="none" stroke="#e6e6e6" stroke-width="1.7"/><rect x="2.2" y="8.4" width="13.2" height="14" rx="3" fill="#262626" stroke="#e6e6e6" stroke-width="1.7"/></svg>
<div class="abs" style="left:2254px;top:185px;width:240px;height:39px;background:#2e2e2e;border-bottom:1.5px solid #3a3a3a"></div>
<span class="se" style="right:5.5px;top:196px;color:#c4c4c4;font-size:18.5px">솔루션 탐색기 검색(Ctrl+;)</span>
<div class="abs" style="left:2247px;top:268px;width:240px;height:36.5px;background:#2f2f2f"></div>
<span class="se" style="right:93px;top:242px">솔루션 </span><span class="se" style="left:2381.5px;top:242px;letter-spacing:0.3px">'0311Assign05' (1/1개 프로젝트)</span>
<span class="se" style="left:2341.7px;top:278.5px;font-weight:bold;color:#fff;font-size:17px">0311Assign05</span>
<span class="se" style="left:2361px;top:314px">참조</span>
<span class="se" style="right:24.5px;top:349.3px;font-size:18.5px">외부 종속성</span>
<span class="se" style="right:24.5px;top:383.2px;font-size:18.5px">리소스 파일</span>
<span class="se" style="right:43px;top:420.2px;font-size:18.5px">소스 파일</span>
<span class="se" style="left:2375.4px;top:458.7px">0311Assign05.cpp</span>
<span class="se" style="right:43px;top:493.2px;font-size:18.5px">헤더 파일</span>

<!-- PROPERTY DIALOG -->
<div id="dlg">
<div class="abs" style="left:0;top:0;width:1199px;height:43.5px;background:#f3f3f3"></div>
<span class="d" style="left:13px;top:8.5px;color:#9b9b9b;font-size:18.5px"><span class="l">0311Assign05</span> 속성 페이지</span>
<span class="d" style="left:1089px;top:6.5px;color:#9b9b9b;font-size:19px"><span class="l">?</span></span>
<svg style="left:1155.5px;top:12px" width="18" height="18" viewBox="0 0 18 18"><path d="M1 1 L17 17 M17 1 L1 17" stroke="#8a8a8a" stroke-width="1.4"/></svg>
<span class="d" style="left:18.5px;top:68.5px">구성<span class="l">(C):</span></span>
<div class="cb" style="left:97px;top:63px;width:394px;height:33.5px"></div>
<span class="d" style="left:102px;top:68.5px">모든 구성</span>
<svg style="left:470.5px;top:76.2px" width="13" height="8" viewBox="0 0 13 8"><path d="M1 1 L6.5 6.5 L12 1" fill="none" stroke="#5a5a5a" stroke-width="1.2"/></svg>
<span class="d" style="left:507px;top:68.5px">플랫폼<span class="l">(P):</span></span>
<div class="cb" style="left:602px;top:63px;width:394px;height:33.5px"></div>
<span class="d" style="left:607px;top:68.5px">모든 플랫폼</span>
<svg style="left:975.5px;top:76.2px" width="13" height="8" viewBox="0 0 13 8"><path d="M1 1 L6.5 6.5 L12 1" fill="none" stroke="#5a5a5a" stroke-width="1.2"/></svg>
<div class="btn" style="left:1013px;top:60px;width:168px;height:38px">구성 관리자<span class="l">(O)...</span></div>
<div class="abs" style="left:18.5px;top:115px;width:300px;height:560px;background:#f5f5f5;border:1px solid #7c8290"></div>
<div class="abs" style="left:20.5px;top:201px;width:295.5px;height:27.6px;background:#cccedb"></div>
<svg style="left:26.5px;top:125.5px" width="10" height="10" viewBox="0 0 10 10"><path d="M9.5 0.5 V9.5 H0.5 Z" fill="#1e1e1e"/></svg>
<span class="d" style="left:44.5px;top:119.1px">구성 속성</span>
<span class="d" style="left:63.5px;top:146.5px">일반</span>
<span class="d" style="left:63.5px;top:174.7px">고급</span>
<span class="d" style="left:63.5px;top:202.1px">디버깅</span>
<span class="d" style="left:62.5px;top:231.0px"><span class="l">VC++</span> 디렉터리</span>
<span class="d" style="left:62.5px;top:259.5px"><span class="l">C/C++</span></span>
<svg style="left:47.5px;top:264.5px" width="9" height="14" viewBox="0 0 9 14"><path d="M1 1.2 L7.6 6.6 L1 12 Z" fill="none" stroke="#404040" stroke-width="1.1" stroke-linejoin="round"/></svg>
<span class="d" style="left:63.5px;top:286.5px">링커</span>
<svg style="left:47.5px;top:291.5px" width="9" height="14" viewBox="0 0 9 14"><path d="M1 1.2 L7.6 6.6 L1 12 Z" fill="none" stroke="#404040" stroke-width="1.1" stroke-linejoin="round"/></svg>
<span class="d" style="left:63.5px;top:314.5px">매니페스트 도구</span>
<svg style="left:47.5px;top:319.5px" width="9" height="14" viewBox="0 0 9 14"><path d="M1 1.2 L7.6 6.6 L1 12 Z" fill="none" stroke="#404040" stroke-width="1.1" stroke-linejoin="round"/></svg>
<span class="d" style="left:62.5px;top:342.5px"><span class="l">XML</span> 문서 생성기</span>
<svg style="left:47.5px;top:347.5px" width="9" height="14" viewBox="0 0 9 14"><path d="M1 1.2 L7.6 6.6 L1 12 Z" fill="none" stroke="#404040" stroke-width="1.1" stroke-linejoin="round"/></svg>
<span class="d" style="left:63.5px;top:370.5px">찾아보기 정보</span>
<svg style="left:47.5px;top:375.5px" width="9" height="14" viewBox="0 0 9 14"><path d="M1 1.2 L7.6 6.6 L1 12 Z" fill="none" stroke="#404040" stroke-width="1.1" stroke-linejoin="round"/></svg>
<span class="d" style="left:63.5px;top:398.5px">빌드 이벤트</span>
<svg style="left:47.5px;top:403.5px" width="9" height="14" viewBox="0 0 9 14"><path d="M1 1.2 L7.6 6.6 L1 12 Z" fill="none" stroke="#404040" stroke-width="1.1" stroke-linejoin="round"/></svg>
<span class="d" style="left:63.5px;top:426.5px">사용자 지정 빌드 단계</span>
<svg style="left:47.5px;top:431.5px" width="9" height="14" viewBox="0 0 9 14"><path d="M1 1.2 L7.6 6.6 L1 12 Z" fill="none" stroke="#404040" stroke-width="1.1" stroke-linejoin="round"/></svg>
<span class="d" style="left:62.5px;top:455.5px"><span class="l">Code Analysis</span></span>
<svg style="left:47.5px;top:460.5px" width="9" height="14" viewBox="0 0 9 14"><path d="M1 1.2 L7.6 6.6 L1 12 Z" fill="none" stroke="#404040" stroke-width="1.1" stroke-linejoin="round"/></svg>
<span class="d" style="left:335.5px;top:116.5px">시작할 디버거<span class="l">:</span></span>
<div class="cb" style="left:333px;top:155.5px;width:846.5px;height:33px"></div>
<span class="d" style="left:337.5px;top:162px">로컬 <span class="l">Windows</span> 디버거</span>
<svg style="left:1159.0px;top:170px" width="13" height="8" viewBox="0 0 13 8"><path d="M1 1 L6.5 6.5 L12 1" fill="none" stroke="#5a5a5a" stroke-width="1.2"/></svg>
<div class="abs" style="left:333px;top:221px;width:847.5px;height:433.5px;background:#fff;border:1px solid #a8a8a8;border-top:1.5px solid #9a9a9a;border-left:none"></div>
<div class="abs" style="left:333px;top:222.5px;width:28.6px;height:243px;background:#f0f3fa"></div>
<div class="abs" style="left:361.6px;top:250.6px;width:308.8px;height:26px;background:#f1f5fb"></div>
<div class="abs" style="left:670.4px;top:250.6px;width:514px;height:26.4px;background:#fff"></div>
<div class="abs" style="left:1155px;top:249.2px;width:26px;height:1.4px;background:#b8b8b8"></div>
<span class="d" style="left:368.5px;top:225.4px">명령</span>
<span class="d" style="left:675px;top:225.8px"><span class="l">$(TargetPath)</span></span>
<span class="d" style="left:368.5px;top:252.36px">명령 인수</span>
<span class="d" style="left:675px;top:252.76px;font-weight:bold;color:#000;letter-spacing:-0.2px"><span class="l">D:₩Sample₩*.zip *.png</span></span>
<div class="abs" style="left:361.6px;top:276.96px;width:819px;height:1px;background:#f0f0f0"></div>
<span class="d" style="left:368.5px;top:279.32px">작업 디렉터리</span>
<span class="d" style="left:675px;top:279.72px"><span class="l">$(ProjectDir)</span></span>
<div class="abs" style="left:361.6px;top:303.92px;width:819px;height:1px;background:#f0f0f0"></div>
<span class="d" style="left:368.5px;top:306.28px">연결</span>
<span class="d" style="left:675px;top:306.68px">아니요</span>
<div class="abs" style="left:361.6px;top:330.88px;width:819px;height:1px;background:#f0f0f0"></div>
<span class="d" style="left:368.5px;top:333.24px">디버거 형식</span>
<span class="d" style="left:675px;top:333.64px">자동</span>
<div class="abs" style="left:361.6px;top:357.84px;width:819px;height:1px;background:#f0f0f0"></div>
<span class="d" style="left:368.5px;top:360.2px">환경</span>
<div class="abs" style="left:361.6px;top:384.8px;width:819px;height:1px;background:#f0f0f0"></div>
<span class="d" style="left:368.5px;top:387.16px">환경 병합</span>
<span class="d" style="left:675px;top:387.56px">예</span>
<div class="abs" style="left:361.6px;top:411.76px;width:819px;height:1px;background:#f0f0f0"></div>
<span class="d" style="left:368.5px;top:414.12px"><span class="l">SQL</span> 디버깅</span>
<span class="d" style="left:675px;top:414.52px">아니요</span>
<div class="abs" style="left:361.6px;top:438.72px;width:819px;height:1px;background:#f0f0f0"></div>
<span class="d" style="left:368.5px;top:441.08px"><span class="l">Amp</span> 기본 액셀러레이터</span>
<span class="d" style="left:675px;top:441.48px"><span class="l">WARP</span> 소프트웨어 액셀러레이터</span>
<div class="abs" style="left:361.6px;top:465.68px;width:819px;height:1px;background:#f0f0f0"></div>
<div class="abs" style="left:670px;top:277px;width:1px;height:188px;background:#f3f3f3"></div>
<div class="abs" style="left:361.6px;top:249.4px;width:308.6px;height:1.6px;background:#0f6cbd"></div>
<div class="abs" style="left:333px;top:658px;width:847.5px;height:88px;background:#f0f0f0;border:1px solid #a8a8a8"></div>
<span class="d" style="right:511px;top:690.5px">명령 인수 <span class="l">-</span> 디버깅 중에 전달할 명령줄 인수입니다<span class="l">.</span></span>
<div class="btn" style="left:862px;top:761px;width:95.5px;height:37.5px">확인</div>
<div class="btn" style="left:974px;top:761px;width:95.5px;height:37.5px">취소</div>
<div class="btn" style="left:1086px;top:761px;width:94px;height:37.5px;background:#f5f5f5;border-color:#e6e6e6;color:#a0a0a0">적용<span class="l">(A)</span></div>
</div>

<!-- CONSOLE -->
<div id="con">
<div class="abs" style="left:0;top:0;width:1733px;height:58.8px;background:#2c2c2c"></div>
<svg style="left:0;top:0" width="500" height="60" viewBox="0 0 500 60"><path d="M6 58.2 Q13.8 58.2 13.8 50.5 V19 Q13.8 10.8 22 10.8 H366 Q374.2 10.8 374.2 19 V50.5 Q374.2 58.2 382 58.2 Z" fill="#0c0c0c"/></svg>
<svg style="left:28px;top:23px" width="24" height="24" viewBox="0 0 24 24"><rect x="1.8" y="1.8" width="20" height="20.6" rx="4" fill="none" stroke="#f4f4f4" stroke-width="1.6"/><path d="M2 6.6 H21.6" stroke="#f4f4f4" stroke-width="1.5"/><text x="3.6" y="17.6" font-family="Liberation Sans,sans-serif" font-size="8.6" font-weight="bold" fill="#f4f4f4" letter-spacing="-0.3">C:\</text></svg>
<span class="t" style="left:67.3px;top:25.5px;font-size:18px;line-height:22px;color:#fff;letter-spacing:0.22px">Microsoft Visual Studio <span style="font-size:19.2px">디버그</span></span>
<svg style="left:335.5px;top:28.4px" width="13" height="13" viewBox="0 0 13 13"><path d="M0.6 0.6 L12.4 12.4 M12.4 0.6 L0.6 12.4" stroke="#f0f0f0" stroke-width="1.4"/></svg>
<svg style="left:400px;top:27.5px" width="15" height="15" viewBox="0 0 15 15"><path d="M7.5 0 V15 M0 7.5 H15" stroke="#f0f0f0" stroke-width="1.5"/></svg>
<div class="abs" style="left:431.3px;top:18px;width:1.4px;height:34px;background:#454545"></div>
<svg style="left:446.5px;top:31.5px" width="13" height="8" viewBox="0 0 13 8"><path d="M0.8 0.8 L6.5 6.6 L12.2 0.8" fill="none" stroke="#f0f0f0" stroke-width="1.5"/></svg>
<div class="abs" style="left:1550px;top:28.3px;width:15px;height:2px;background:#f2f2f2"></div>
<div class="abs" style="left:1619px;top:22px;width:15.4px;height:15.4px;border:2px solid #f2f2f2;border-radius:2.5px"></div>
<svg style="left:1688px;top:21.5px" width="16" height="16" viewBox="0 0 16 16"><path d="M0.6 0.6 L15.4 15.4 M15.4 0.6 L0.6 15.4" stroke="#f2f2f2" stroke-width="1.9"/></svg>
</div>
<div class="cl" style="top:821.5px">D:\GIT\s-developer\Src\0311Assign05\x64\Debug\0311Assign05.exe</div>
<div class="cl" style="top:849.33px">D:\Sample\*.zip</div>
<div class="cl" style="top:877.16px">*.png</div>
<div class="cl" style="top:932.82px">D:\GIT\s-developer\Src\0311Assign05\x64\Debug\0311Assign05.exe(<span class="k">프로세스</span> 19616)<span class="k">이</span>(<span class="k">가</span>) 0 <span class="k">코드</span>(0x0)<span class="k">와</span> <span class="k">함께</span> <span class="k">종료되었습니다</span>.</div>
<div class="cl" style="top:960.65px"><span class="k">디버깅이</span> <span class="k">중지될</span> <span class="k">때</span> <span class="k">콘솔을</span> <span class="k">자동으로</span> <span class="k">닫으려면</span> [<span class="k">도구</span>] -&gt; [<span class="k">옵션</span>] -&gt; [<span class="k">디버깅</span>] &gt; [<span class="k">디버깅이</span> <span class="k">중지되면</span> <span class="k">자동으로</span> <span class="k">콘솔</span> <span class="k">닫기</span>]<span class="k">를</span> <span class="k">사용</span></div>
<div class="cl" style="top:988.48px"><span class="k">하도록</span> <span class="k">설정합니다</span>.</div>
<div class="cl" style="top:1016.31px"><span class="k">이</span> <span class="k">창을</span> <span class="k">닫으려면</span> <span class="k">아무</span> <span class="k">키나</span> <span class="k">누르세요</span>...</div>

</body>
</html>
